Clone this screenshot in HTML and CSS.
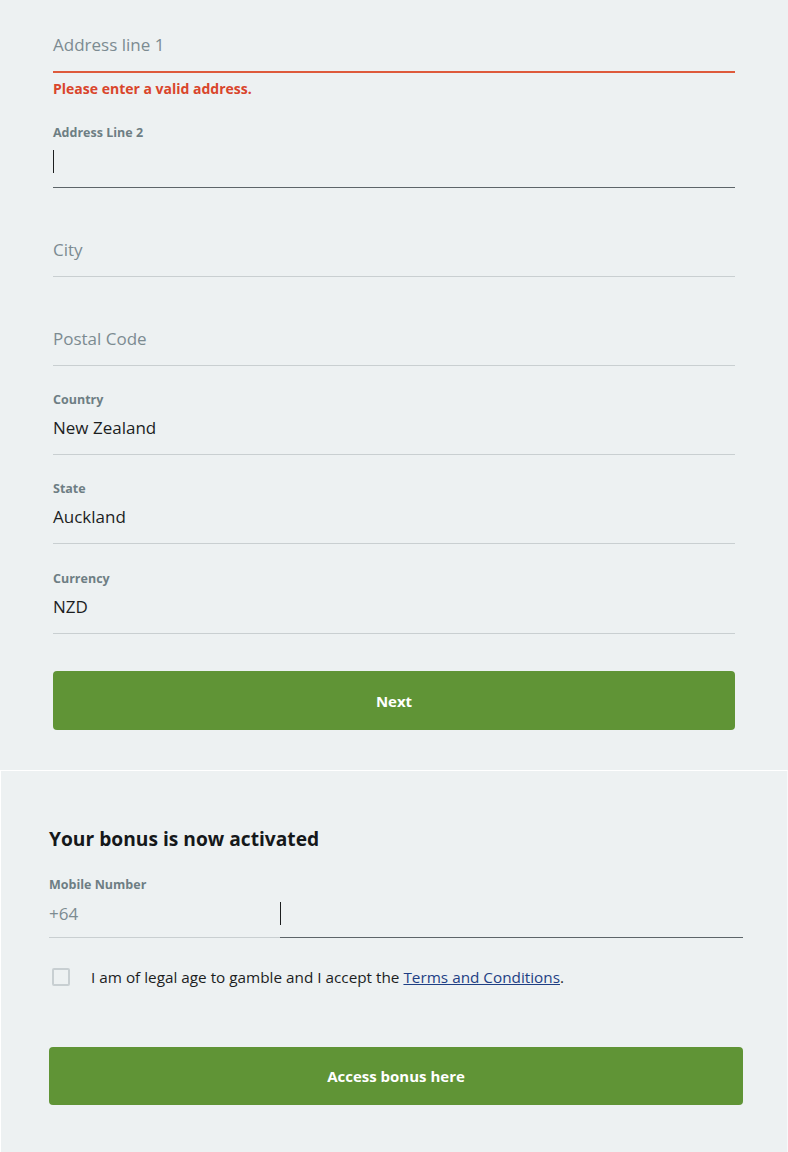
FILE: index.html
```html
<!DOCTYPE html>
<html lang="en">
<head>
<meta charset="utf-8">
<title>Registration</title>
<link rel="stylesheet" href="styles.css">
</head>
<body>
<section class="address">
  <div class="field field-first field-error">
    <div class="input placeholder">Address line 1</div>
  </div>
  <div class="error-msg">Please enter a valid address.</div>
  <div class="field field-labeled field-active field-a2">
    <div class="label">Address Line 2</div>
    <div class="input"><span class="caret"></span></div>
  </div>
  <div class="field field-plain">
    <div class="input placeholder">City</div>
  </div>
  <div class="field field-plain">
    <div class="input placeholder">Postal Code</div>
  </div>
  <div class="field field-labeled">
    <div class="label">Country</div>
    <div class="input">New Zealand</div>
  </div>
  <div class="field field-labeled">
    <div class="label">State</div>
    <div class="input">Auckland</div>
  </div>
  <div class="field field-labeled field-last">
    <div class="label">Currency</div>
    <div class="input">NZD</div>
  </div>
  <button class="btn btn-next">Next</button>
</section>
<section class="bonus">
  <h2 class="bonus-title">Your bonus is now activated</h2>
  <div class="label phone-label">Mobile Number</div>
  <div class="phone-row">
    <div class="phone-code">+64</div>
    <div class="phone-number"><span class="caret"></span></div>
  </div>
  <label class="check-row">
    <span class="checkbox"></span>
    <span class="check-text">I am of legal age to gamble and I accept the <a href="#" class="link">Terms and Conditions</a>.</span>
  </label>
  <button class="btn btn-bonus">Access bonus here</button>
</section>
</body>
</html>
```
FILE: styles.css
```css
* { box-sizing: border-box; }
html, body {
  margin: 0;
  padding: 0;
  background: #edf1f2;
  font-family: "Open Sans", "Noto Sans", sans-serif;
  color: #1c1e1f;
}
body { width: 788px; height: 1152px; overflow: hidden; }

.address {
  padding: 0 53px 40px 53px;
}
.field {
  border-bottom: 1px solid #c9cfd1;
  padding-bottom: 14px;
}
.input {
  height: 24px;
  line-height: 24px;
  font-size: 17px;
  display: flex;
  align-items: center;
}
.placeholder { color: #7c8b91; }
.label {
  font-size: 12.5px;
  line-height: 17px;
  font-weight: 700;
  color: #6e7e84;
}
.field-first {
  padding-top: 33px;
  border-bottom: 2px solid #de5a3c;
}
.error-msg {
  margin-top: 7px;
  font-size: 14px;
  line-height: 18px;
  font-weight: 700;
  color: #d9452b;
}
.field-a2 {
  margin-top: 26px;
  border-bottom: 1px solid #5d6569;
}
.field-a2 .label { margin-bottom: 10px; }
.field-plain { padding-top: 50px; }
.field-labeled { padding-top: 25px; }
.field-labeled .label { margin-bottom: 8px; }
.field-a2 { padding-top: 0; }
.field-last { padding-top: 26px; }

.caret {
  display: inline-block;
  width: 1px;
  height: 23px;
  background: #1c1e1f;
}

.btn {
  display: block;
  width: 100%;
  border: none;
  border-radius: 4px;
  background: #609436;
  color: #ffffff;
  font-family: inherit;
  font-weight: 700;
  font-size: 15px;
  cursor: pointer;
}
.btn-next {
  margin-top: 37px;
  height: 59px;
}

.bonus {
  border-top: 1px solid #ffffff;
  border-left: 1px solid #ffffff;
  border-right: 1px solid #f7f9fa;
  padding: 55px 44px 0 48px;
  height: 382px;
}
.bonus-title {
  margin: 0;
  font-size: 19.2px;
  line-height: 26px;
  font-weight: 700;
  color: #15181a;
}
.phone-label { margin-top: 24px; }
.phone-row {
  display: flex;
  margin-top: 9px;
}
.phone-code {
  width: 231px;
  height: 36px;
  line-height: 24px;
  font-size: 17px;
  color: #7c8b91;
  border-bottom: 1px solid #c9cfd1;
}
.phone-number {
  flex: 1;
  height: 36px;
  border-bottom: 1px solid #5d6569;
}
.check-row {
  display: flex;
  align-items: center;
  margin-top: 29px;
  font-size: 15.3px;
  line-height: 20px;
}
.checkbox {
  width: 18px;
  height: 18px;
  margin-left: 3px;
  border: 2px solid #c8cfd2;
  border-radius: 2px;
  background: #edf1f2;
  flex: none;
}
.check-text { margin-left: 21px; color: #1c1e1f; }
.link { color: #1e3f84; text-decoration: underline; }
.btn-bonus {
  margin-top: 60px;
  height: 58px;
}
```
